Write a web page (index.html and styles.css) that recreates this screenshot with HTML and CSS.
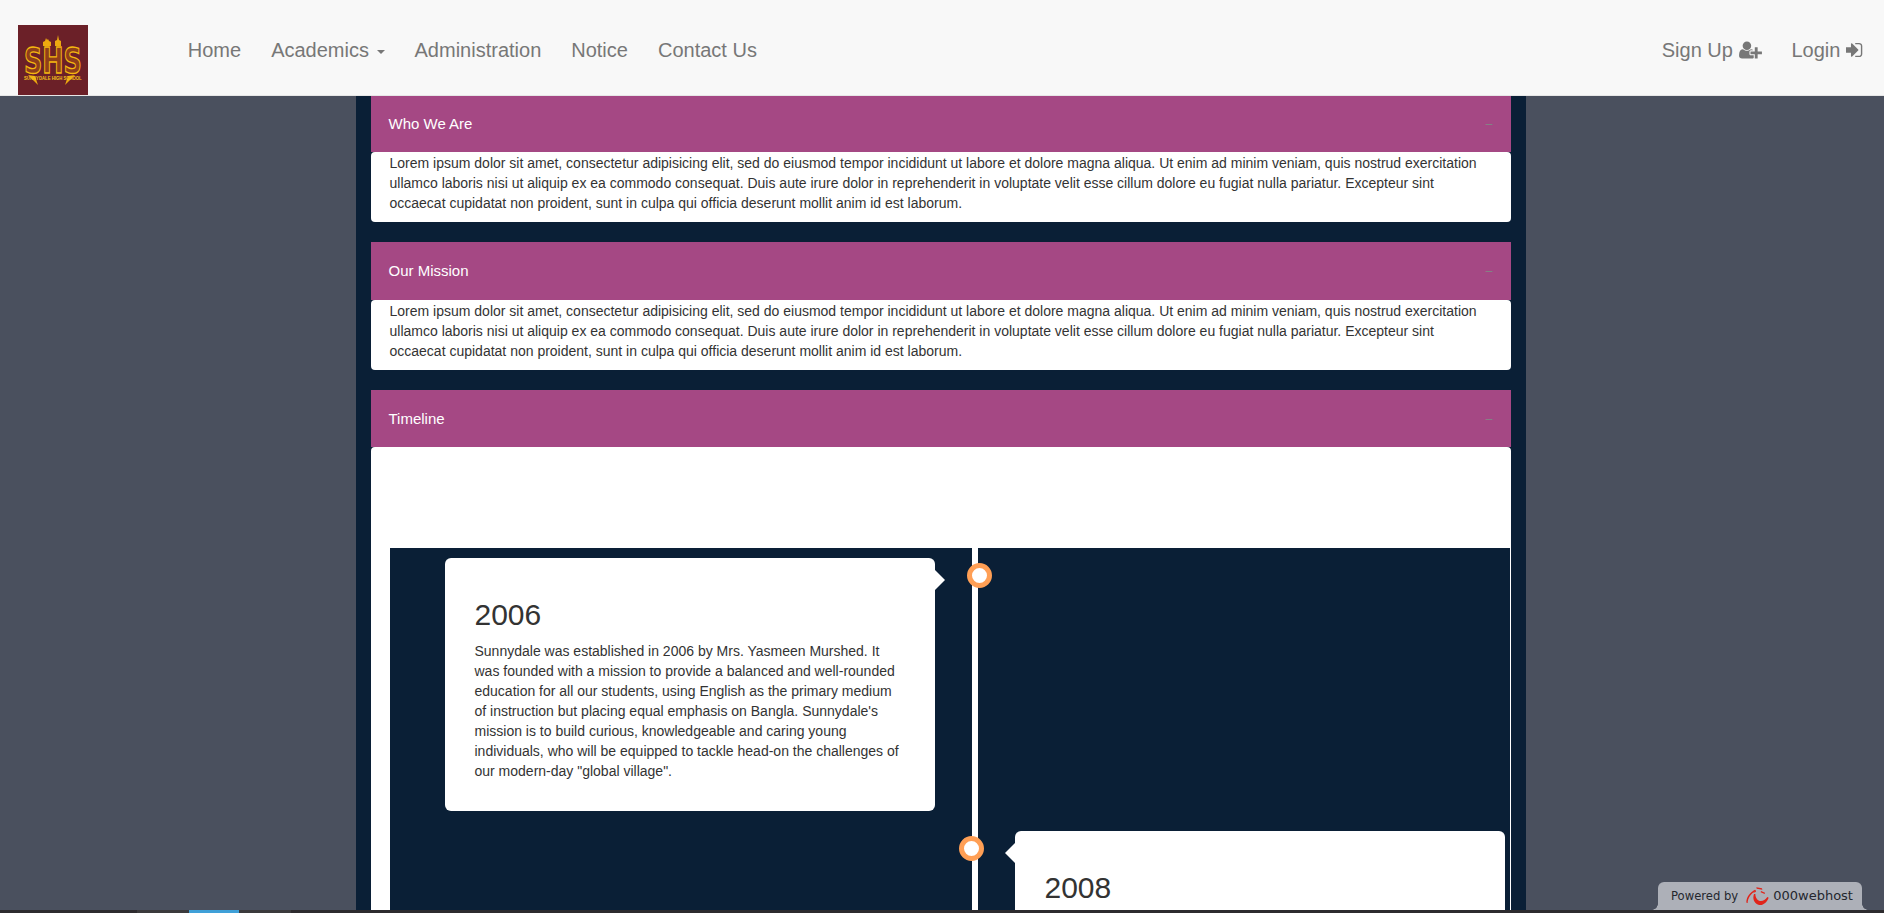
FILE: index.html
```html
<!DOCTYPE html>
<html lang="en">
<head>
<meta charset="utf-8">
<title>Sunnydale High School</title>
<link rel="stylesheet" href="styles.css">
</head>
<body>
<header class="navbar">
  <a class="brand" href="#">
    <svg class="logo" viewBox="0 0 70 70" role="img" aria-label="Sunnydale High School logo">
      <rect width="70" height="70" fill="#6b2028"/>
      <path class="logo-crown" d="M25 21v-4l2-1 1-3 1 2 1-1 1 2 2 1v4zM37 21v-5l2-1 1-5 1 5 2 1v5z"/>
      <path class="logo-crown" d="M10 50l7 1 3 9-4-4zM57 50l-7 1-3 9 4-4z"/>
      <text class="logo-shs" transform="translate(6 48) scale(.707 1)">SHS</text>
      <text class="logo-sub" transform="translate(6 54.5) scale(.777 1)">SUNNYDALE HIGH SCHOOL</text>
    </svg>
  </a>
  <nav class="nav-main">
    <a class="nav-link" href="#">Home</a>
    <a class="nav-link" href="#">Academics <span class="caret"></span></a>
    <a class="nav-link" href="#">Administration</a>
    <a class="nav-link" href="#">Notice</a>
    <a class="nav-link" href="#">Contact Us</a>
  </nav>
  <nav class="nav-right">
    <a class="nav-link" href="#">Sign Up <svg class="icon icon-user" viewBox="0 0 2048 1792"><path d="M704 896q-159 0-271.500-112.500t-112.500-271.500 112.500-271.500 271.500-112.500 271.500 112.500 112.500 271.500-112.500 271.500-271.500 112.500zm960 128h352q13 0 22.500 9.500t9.500 22.500v192q0 13-9.500 22.500t-22.500 9.500h-352v352q0 13-9.500 22.500t-22.500 9.500h-192q-13 0-22.500-9.500t-9.500-22.500v-352h-352q-13 0-22.500-9.500t-9.500-22.500v-192q0-13 9.500-22.500t22.500-9.500h352v-352q0-13 9.500-22.500t22.500-9.500h192q13 0 22.500 9.500t9.500 22.500v352zm-736 224q0 52 38 90t90 38h256v238q-68 50-171 50h-874q-121 0-194-69t-73-190q0-53 3.500-103.500t14-109 26.500-108.500 43-97.500 62-81 85.500-53.500 111.500-20q19 0 39 17 79 61 154.500 91.500t164.500 30.500 164.500-30.500 154.500-91.500q20-17 39-17 132 0 217 96h-223q-52 0-90 38t-38 90v192z"/></svg></a>
    <a class="nav-link" href="#">Login <svg class="icon icon-sign" viewBox="64 0 1536 1792"><path d="M1184 896q0 26-19 45l-544 544q-19 19-45 19t-45-19-19-45v-288h-448q-26 0-45-19t-19-45v-384q0-26 19-45t45-19h448v-288q0-26 19-45t45-19 45 19l544 544q19 19 19 45zm352-352v704q0 119-84.500 203.500t-203.500 84.500h-320q-13 0-22.500-9.500t-9.500-22.500q0-4-1-20t-.5-26.500 3-23.500 10-19.500 20.500-6.500h320q66 0 113-47t47-113v-704q0-66-47-113t-113-47h-288-11-13t-11.500-1-11.500-3-8-5.500-7-9-2-13.500q0-4-1-20t-.5-26.500 3-23.500 10-19.500 20.500-6.500h320q119 0 203.500 84.500t84.500 203.500z"/></svg></a>
  </nav>
</header>

<main class="page">
  <div class="column">
    <section class="panel">
      <div class="panel-heading"><span>Who We Are</span><span class="panel-toggle">−</span></div>
      <div class="panel-body">Lorem ipsum dolor sit amet, consectetur adipisicing elit, sed do eiusmod tempor incididunt ut labore et dolore magna aliqua. Ut enim ad minim veniam, quis nostrud exercitation ullamco laboris nisi ut aliquip ex ea commodo consequat. Duis aute irure dolor in reprehenderit in voluptate velit esse cillum dolore eu fugiat nulla pariatur. Excepteur sint occaecat cupidatat non proident, sunt in culpa qui officia deserunt mollit anim id est laborum.</div>
    </section>
    <section class="panel">
      <div class="panel-heading"><span>Our Mission</span><span class="panel-toggle">−</span></div>
      <div class="panel-body">Lorem ipsum dolor sit amet, consectetur adipisicing elit, sed do eiusmod tempor incididunt ut labore et dolore magna aliqua. Ut enim ad minim veniam, quis nostrud exercitation ullamco laboris nisi ut aliquip ex ea commodo consequat. Duis aute irure dolor in reprehenderit in voluptate velit esse cillum dolore eu fugiat nulla pariatur. Excepteur sint occaecat cupidatat non proident, sunt in culpa qui officia deserunt mollit anim id est laborum.</div>
    </section>
    <section class="panel">
      <div class="panel-heading"><span>Timeline</span><span class="panel-toggle">−</span></div>
      <div class="panel-body timeline-body">
        <div class="timeline">
          <div class="timeline-line"></div>
          <article class="event event-left">
            <span class="dot dot-left"></span>
            <h2>2006</h2>
            <p>Sunnydale was established in 2006 by Mrs. Yasmeen Murshed. It was founded with a mission to provide a balanced and well-rounded education for all our students, using English as the primary medium of instruction but placing equal emphasis on Bangla. Sunnydale's mission is to build curious, knowledgeable and caring young individuals, who will be equipped to tackle head-on the challenges of our modern-day "global village".</p>
          </article>
          <article class="event event-right">
            <span class="dot dot-right"></span>
            <h2>2008</h2>
          </article>
        </div>
      </div>
    </section>
  </div>
</main>

<footer class="strip">
  <span class="seg seg-a"></span>
  <span class="seg seg-b"></span>
  <span class="seg seg-c"></span>
  <span class="seg seg-b2"></span>
</footer>

<a class="badge" href="#">
  <span class="badge-by">Powered by</span>
  <svg class="badge-logo" viewBox="0 0 72 60">
    <path d="M30 11C16 18 5 32 4 47c0 3 2 5 4 4C8 36 18 22 33 14z"/>
    <path d="M27 24c-5 14 0 27 13 32 13 4 25-6 31-21l-4-2c-7 9-16 15-25 11-8-4-11-12-11-20z"/>
    <path d="M34 4l17 3 1 4-17-3zM48 15l12 5-1 4-12-5zM25 17l7-3 1 3-7 3z"/>
  </svg>
  <span class="badge-name">000webhost</span>
</a>
</body>
</html>
```

FILE: styles.css
```css
* {
  box-sizing: border-box;
}

html,
body {
  height: 100%;
  margin: 0;
}

body {
  display: flex;
  flex-direction: column;
  overflow: hidden;
  background: #4a505e;
  color: #333;
  font-family: "Liberation Sans", Arial, sans-serif;
  font-size: 14px;
  line-height: 20px;
}

a {
  text-decoration: none;
}

.navbar {
  position: relative;
  z-index: 2;
  display: flex;
  flex: none;
  align-items: flex-start;
  height: 96px;
  padding-left: 18px;
  background: #f8f8f8;
  border-bottom: 1px solid #e7e7e7;
}

.brand {
  display: block;
  width: 70px;
  height: 70px;
  margin-top: 25px;
}

.logo {
  display: block;
  width: 70px;
  height: 70px;
}

.logo-crown {
  fill: #eda90f;
}

.logo-shs {
  fill: #8f3f1a;
  stroke: #f5b80f;
  stroke-width: 1.3px;
  font-family: "DejaVu Sans", sans-serif;
  font-size: 36px;
  font-weight: 700;
}

.logo-sub {
  fill: #f5c21b;
  font-family: "Liberation Sans", sans-serif;
  font-size: 5.5px;
  font-weight: 700;
}

.nav-main,
.nav-right {
  display: flex;
  padding-top: 40px;
  font-size: 20px;
}

.nav-main {
  margin-left: 84.8px;
}

.nav-right {
  margin-left: auto;
  margin-right: 6px;
}

.nav-link {
  padding: 0 15px;
  color: #777;
  white-space: nowrap;
}

.caret {
  display: inline-block;
  width: 0;
  height: 0;
  margin-left: 2px;
  vertical-align: middle;
  border-top: 4px solid #777;
  border-right: 4px solid transparent;
  border-left: 4px solid transparent;
}

.icon {
  height: 20px;
  fill: #777;
  vertical-align: -3px;
}

.icon-user {
  width: 23px;
}

.icon-sign {
  width: 17px;
}

.page {
  flex: 1;
  min-height: 0;
  padding-right: 2px;
  overflow: hidden;
}

.column {
  width: 1170px;
  height: 100%;
  margin: 0 auto;
  padding: 0 15px;
  overflow: hidden;
  background: #0a1f36;
}

.panel {
  margin-bottom: 20px;
}

.panel:first-child {
  margin-top: -1.5px;
}

.panel-heading {
  display: flex;
  justify-content: space-between;
  padding: 21px 18px 20px 17.5px;
  background: #a54884;
  color: #fff;
  font-size: 15px;
  line-height: 16.5px;
}

.panel-toggle {
  color: #858085;
  font-size: 14px;
}

.panel-body {
  height: 70px;
  padding: 1.25px 19px 0 18.5px;
  background: #fff;
  border-radius: 4px;
}

.timeline-body {
  height: auto;
  padding: 101px 1px 0 19px;
}

.timeline {
  display: grid;
  grid-template-columns: 582px 6px 531px;
  row-gap: 20px;
  padding-top: 10px;
  background: #0a1f36;
}

.timeline-line {
  grid-column: 2;
  grid-row: 1 / span 2;
  margin-top: -10px;
  background: #fff;
}

.event {
  position: relative;
  width: 490px;
  padding: 40px 30px 30px 29.5px;
  background: #fff;
  border-radius: 6px;
}

.event::after {
  content: "";
  position: absolute;
  top: 12px;
  border-top: 10px solid transparent;
  border-bottom: 10px solid transparent;
}

.event-left {
  grid-column: 1;
  grid-row: 1;
  margin-left: 55px;
}

.event-left::after {
  right: -10px;
  border-left: 10px solid #fff;
}

.event-right {
  grid-column: 3;
  grid-row: 2;
  min-height: 220px;
  margin-left: 37px;
}

.event-right::after {
  left: -10px;
  border-right: 10px solid #fff;
}

.event h2 {
  margin: 0 0 10px;
  font-size: 30px;
  font-weight: 500;
  line-height: 33px;
}

.event p {
  margin: 0;
}

.dot {
  position: absolute;
  width: 25px;
  height: 25px;
  background: #fff;
  border: 5px solid #ff9f55;
  border-radius: 50%;
}

.dot-left {
  top: 5px;
  right: -57px;
}

.dot-right {
  top: 5px;
  left: -56px;
}

.strip {
  display: flex;
  flex: none;
  height: 3px;
  background: #2d2b2e;
}

.seg-a {
  width: 137px;
}

.seg-b {
  width: 52px;
  background: #3b3a3c;
}

.seg-c {
  width: 50px;
  background: #3fa0d8;
}

.seg-b2 {
  width: 52px;
  background: #3b3a3c;
}

.badge {
  position: absolute;
  right: 22px;
  bottom: 3px;
  display: flex;
  align-items: center;
  width: 204px;
  height: 28px;
  padding-left: 13px;
  background: #adb0b8;
  border-radius: 6px 6px 0 0;
  color: #24272e;
  font-family: "DejaVu Sans", sans-serif;
  white-space: nowrap;
}

.badge::before,
.badge::after {
  content: "";
  position: absolute;
  bottom: 0;
  width: 6px;
  height: 6px;
}

.badge::before {
  left: -6px;
  background: radial-gradient(circle at 0 0, transparent 5.5px, #adb0b8 6px);
}

.badge::after {
  right: -6px;
  background: radial-gradient(circle at 100% 0, transparent 5.5px, #adb0b8 6px);
}

.badge-by {
  font-size: 11.6px;
}

.badge-logo {
  flex: none;
  width: 24px;
  height: 20px;
  margin-left: 7px;
  fill: #e0251b;
}

.badge-name {
  margin-left: 4px;
  font-size: 13px;
}
```
